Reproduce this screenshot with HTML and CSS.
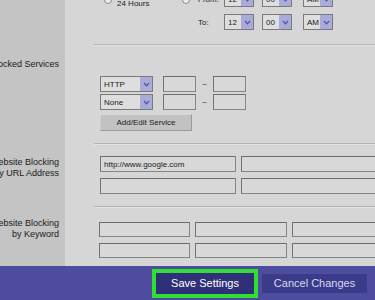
FILE: index.html
```html
<!DOCTYPE html>
<html lang="en">
<head>
    <meta charset="UTF-8">
    <meta name="viewport" content="width=device-width, initial-scale=1.0">
    <title>Access Restrictions</title>
    <link rel="stylesheet" href="styles.css">
</head>
<body>
    <div class="page">
        <div class="sections">
            <!-- times -->
            <div class="section">
                <div class="label"></div>
                <div class="content">
                    <div class="controls times">
                        <div class="cell hours"><span class="radio"></span><span class="hours-text">24 Hours</span></div>
                        <div class="cell from-radio"><span class="radio"></span></div>
                        <div class="cell">From:</div>
                        <div class="selects">
                            <div class="select short"><span>12</span><span class="arrow"><svg width="7" height="5" viewBox="0 0 7 5"><path d="M1 1 L3.5 3.8 L6 1" /></svg></span></div>
                            <div class="select short"><span>00</span><span class="arrow"><svg width="7" height="5" viewBox="0 0 7 5"><path d="M1 1 L3.5 3.8 L6 1" /></svg></span></div>
                            <div class="select short ampm"><span>AM</span><span class="arrow"><svg width="7" height="5" viewBox="0 0 7 5"><path d="M1 1 L3.5 3.8 L6 1" /></svg></span></div>
                        </div>
                        <div></div>
                        <div></div>
                        <div class="cell">To:</div>
                        <div class="selects">
                            <div class="select short"><span>12</span><span class="arrow"><svg width="7" height="5" viewBox="0 0 7 5"><path d="M1 1 L3.5 3.8 L6 1" /></svg></span></div>
                            <div class="select short"><span>00</span><span class="arrow"><svg width="7" height="5" viewBox="0 0 7 5"><path d="M1 1 L3.5 3.8 L6 1" /></svg></span></div>
                            <div class="select short ampm"><span>AM</span><span class="arrow"><svg width="7" height="5" viewBox="0 0 7 5"><path d="M1 1 L3.5 3.8 L6 1" /></svg></span></div>
                        </div>
                    </div>
                    <div class="rule"></div>
                </div>
            </div>

            <!-- blocked services -->
            <div class="section services">
                <div class="label"><div>Blocked Services</div></div>
                <div class="content">
                    <div class="controls">
                        <div class="svc-row">
                            <div class="select wide"><span>HTTP</span><span class="arrow"><svg width="7" height="5" viewBox="0 0 7 5"><path d="M1 1 L3.5 3.8 L6 1" /></svg></span></div>
                            <input class="field port" type="text">
                            <span class="dash">~</span>
                            <input class="field port" type="text">
                        </div>
                        <div class="svc-row">
                            <div class="select wide"><span>None</span><span class="arrow"><svg width="7" height="5" viewBox="0 0 7 5"><path d="M1 1 L3.5 3.8 L6 1" /></svg></span></div>
                            <input class="field port" type="text">
                            <span class="dash">~</span>
                            <input class="field port" type="text">
                        </div>
                        <button class="btn-add">Add/Edit Service</button>
                    </div>
                    <div class="rule"></div>
                </div>
            </div>

            <!-- url blocking -->
            <div class="section urls">
                <div class="label"><div>Website Blocking<br>by URL Address</div></div>
                <div class="content">
                    <div class="controls url-grid">
                        <input class="field" type="text" value="http://www.google.com">
                        <input class="field" type="text">
                        <input class="field" type="text">
                        <input class="field" type="text">
                    </div>
                    <div class="rule"></div>
                </div>
            </div>

            <!-- keyword blocking -->
            <div class="section keywords">
                <div class="label"><div>Website Blocking<br>by Keyword</div></div>
                <div class="content">
                    <div class="controls kw-grid">
                        <input class="field" type="text">
                        <input class="field" type="text">
                        <input class="field" type="text">
                        <input class="field" type="text">
                        <input class="field" type="text">
                        <input class="field" type="text">
                    </div>
                </div>
            </div>
        </div>

        <div class="footer">
            <button class="btn-save">Save Settings</button>
            <button class="btn-cancel">Cancel Changes</button>
        </div>
    </div>
</body>
</html>
```

FILE: styles.css
```css
body {
    margin: 0;
    font-family: 'Liberation Sans', Arial, sans-serif;
    color: #1a1a1a;
    overflow: hidden;
}
.page {
    display: flex;
    flex-direction: column;
    width: 375px;
    height: 300px;
    overflow: hidden;
}
.sections {
    flex: 1;
    display: flex;
    flex-direction: column;
}
.section {
    display: grid;
    grid-template-columns: 66px 1fr;
}
.section.keywords {
    flex: 1;
}
.label {
    display: flex;
    justify-content: flex-end;
    align-items: flex-start;
    padding-right: 6px;
    background-color: #c4c4c4;
    border-right: 1px solid #dadada;
    font-size: 9px;
    line-height: 10.5px;
    text-align: right;
    white-space: nowrap;
}
.content {
    background-color: #d6d6d6;
    overflow: hidden;
}
.controls {
    padding-left: 34px;
}
.rule {
    margin-left: 28px;
    height: 1px;
    background-color: #b3b3b3;
    border-bottom: 1px solid #e2e2e2;
}

/* time rows */
.times {
    display: grid;
    grid-template-columns: 82px 16px 26px auto;
    grid-auto-rows: 16px;
    row-gap: 7px;
    margin-top: -9px;
    padding-bottom: 14px;
    font-size: 8px;
}
.cell {
    display: flex;
    align-items: center;
}
.hours, .from-radio {
    align-items: flex-end;
}
.hours .radio {
    margin-left: 4px;
    margin-right: 5px;
}
.radio {
    width: 8px;
    height: 8px;
    box-sizing: border-box;
    border: 1px solid #8a8a8a;
    border-radius: 50%;
    background-color: #ececec;
    margin-bottom: 3px;
}
.hours-text {
    line-height: 12px;
    margin-bottom: -3px;
}
.selects {
    display: flex;
    gap: 8px;
}
.select {
    display: flex;
    align-items: center;
    box-sizing: border-box;
    height: 16px;
    border: 1px solid #7a7a7a;
    background-color: #dedede;
    font-size: 8px;
    padding-left: 3px;
}
.select.short {
    width: 30px;
}
.select.ampm {
    margin-left: 3px;
}
.select.wide {
    width: 53px;
}
.arrow {
    display: flex;
    align-items: center;
    justify-content: center;
    margin-left: auto;
    width: 12px;
    height: 14px;
    background-color: #a9acd8;
}
.arrow path {
    fill: none;
    stroke: #4e4eae;
    stroke-width: 1.2;
}

/* services */
.services .label {
    padding-top: 13px;
}
.services .controls {
    padding-top: 30px;
    padding-bottom: 12px;
}
.svc-row {
    display: flex;
    align-items: center;
    margin-bottom: 2px;
}
.svc-row + .svc-row {
    margin-bottom: 4px;
}
.svc-row .select {
    margin-right: 10px;
}
.field {
    display: block;
    box-sizing: border-box;
    height: 16px;
    margin: 0;
    padding: 0 3px;
    border: 1px solid #858585;
    border-top-color: #6c6c6c;
    border-left-color: #737373;
    background-color: #d8d8d8;
    font-family: 'Liberation Sans', Arial, sans-serif;
    font-size: 8px;
    color: #1a1a1a;
    outline: none;
}
.field.port {
    width: 33px;
}
.dash {
    width: 17px;
    text-align: center;
    font-size: 8px;
}
.btn-add {
    display: block;
    width: 92px;
    height: 17px;
    padding: 0;
    border: 1px solid #9a9a9a;
    border-top-color: #d8d8d8;
    border-left-color: #cfcfcf;
    background-color: #c2c2c2;
    font-family: 'Liberation Sans', Arial, sans-serif;
    font-size: 8px;
    color: #1a1a1a;
}

/* url blocking */
.urls .label {
    padding-top: 12px;
}
.url-grid {
    display: grid;
    grid-template-columns: 136px 140px;
    gap: 6px 5px;
    padding-top: 11px;
    padding-bottom: 12px;
}

/* keyword blocking */
.keywords .label {
    padding-top: 10px;
}
.kw-grid {
    display: grid;
    grid-template-columns: 91px 92px 92px;
    grid-auto-rows: 15px;
    gap: 6px 5px;
    padding-left: 33px;
    padding-top: 14px;
}
.kw-grid .field {
    height: 15px;
}

/* footer */
.footer {
    display: flex;
    align-items: center;
    gap: 8px;
    height: 34px;
    padding-left: 156px;
    background-color: #4d4c9f;
}
.footer button {
    padding: 0;
    border: none;
    font-family: 'Liberation Sans', Arial, sans-serif;
    font-size: 11px;
}
.btn-save {
    width: 98px;
    height: 21px;
    background-color: #30307a;
    color: #ffffff;
    outline: 4px solid #2fe02f;
}
.btn-cancel {
    width: 105px;
    height: 19px;
    background-color: #3b3b8b;
    color: #d8d8ee;
}
```
